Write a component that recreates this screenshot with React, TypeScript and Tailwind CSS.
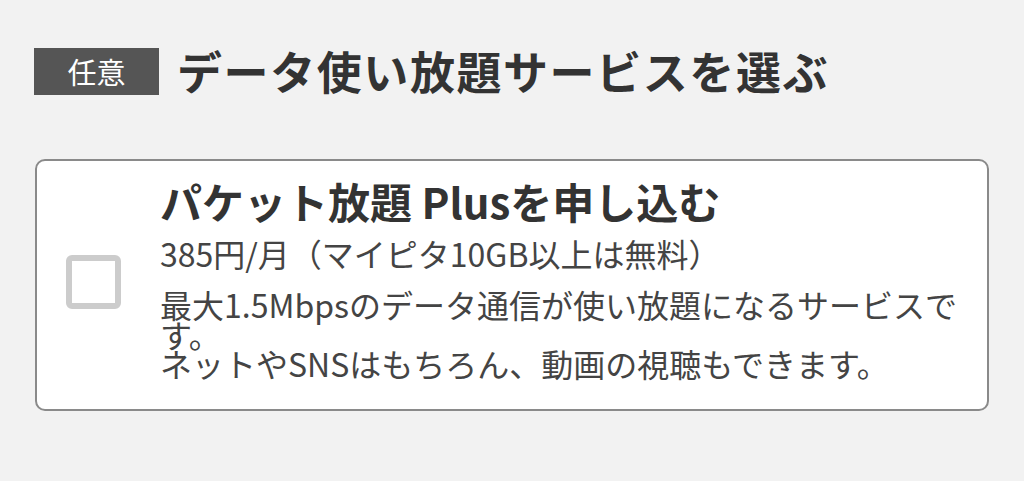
export default function App() {
  return (
    <div
      className="w-[1024px] h-[481px] bg-[#f2f2f2] pt-[48px] px-[34px] text-[#333]"
      style={{ fontFamily: '"Noto Sans CJK JP", "Noto Sans", sans-serif' }}
    >
      <div className="flex items-center gap-[18px]">
        <span className="flex h-[47px] w-[125px] items-center justify-center bg-[#555555] text-[29px] leading-none text-white">
          任意
        </span>
        <h1 className="-mt-[3px] text-[45px] font-bold leading-none tracking-[0.035em] text-[#333333]">
          データ使い放題サービスを選ぶ
        </h1>
      </div>

      <label className="mt-[64px] ml-px flex h-[252px] w-[954px] items-start rounded-[10px] border-2 border-[#8a8a8a] bg-white pl-[29px] pt-[16px]">
        <span className="mb-[22px] h-[54px] w-[55px] shrink-0 self-center rounded-[6px] border-[6px] border-[#cccccc] bg-white" />
        <div className="ml-[39px] w-[810px]">
          <div className="text-[42px] font-bold leading-[48px] text-[#333333]">
            パケット放題 Plusを申し込む
          </div>
          <div className="mt-[9px] text-[32px] leading-[38px] text-[#444444]">
            385円/月（マイピタ10GB以上は無料）
          </div>
          <p className="mt-[18px] text-[32px] leading-[29.5px] text-[#444444]">
            最大1.5Mbpsのデータ通信が使い放題になるサービスです。
            <br />
            ネットやSNSはもちろん、動画の視聴もできます。
          </p>
        </div>
      </label>
    </div>
  );
}
